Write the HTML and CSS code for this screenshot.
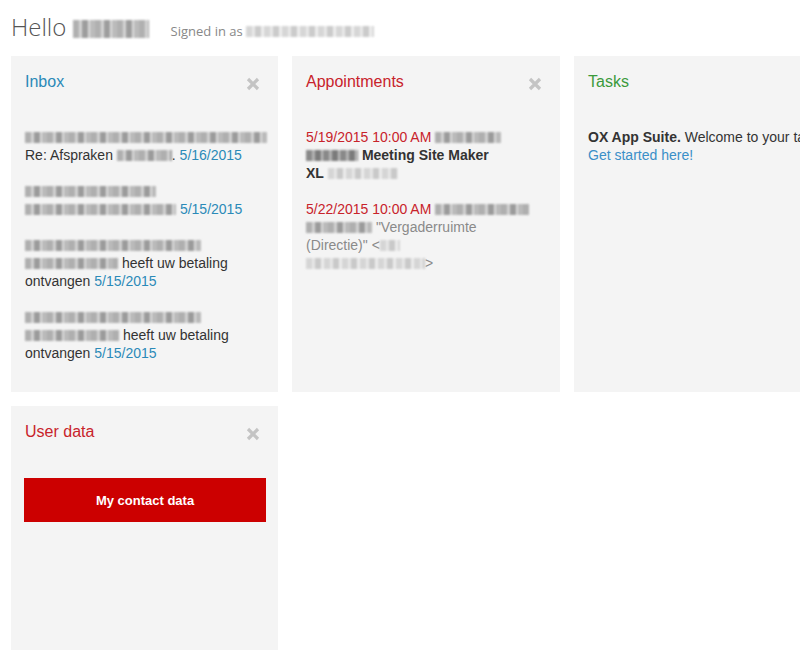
FILE: index.html
```html
<!DOCTYPE html>
<html>
<head>
<meta charset="utf-8">
<link rel="stylesheet" href="styles.css">
</head>
<body>
<header class="header">
  <h1 class="hello">Hello <span class="blur blur-name" style="width:76px"></span></h1>
  <span class="signed">Signed in as <span class="blur blur-light" style="width:128px"></span></span>
</header>
<main class="grid">
  <section class="card">
    <div class="card-head">
      <h2 class="title t-blue">Inbox</h2>
      <svg class="close" viewBox="0 0 14 14"><path d="M2 2L12 12M12 2L2 12"/></svg>
    </div>
    <div class="card-body">
      <p class="item"><span class="blur" style="width:242px"></span><br>Re: Afspraken <span class="blur" style="width:55px"></span>. <span class="date">5/16/2015</span></p>
      <p class="item"><span class="blur" style="width:131px"></span><br><span class="blur" style="width:151px"></span> <span class="date">5/15/2015</span></p>
      <p class="item"><span class="blur" style="width:176px"></span><br><span class="blur" style="width:93px"></span> heeft uw betaling ontvangen <span class="date">5/15/2015</span></p>
      <p class="item"><span class="blur" style="width:176px"></span><br><span class="blur" style="width:94px"></span> heeft uw betaling ontvangen <span class="date">5/15/2015</span></p>
    </div>
  </section>
  <section class="card">
    <div class="card-head">
      <h2 class="title t-red">Appointments</h2>
      <svg class="close" viewBox="0 0 14 14"><path d="M2 2L12 12M12 2L2 12"/></svg>
    </div>
    <div class="card-body">
      <p class="item"><span class="red">5/19/2015 10:00 AM</span> <span class="blur" style="width:66px"></span><br><b><span class="blur blur-dark" style="width:52px"></span> Meeting Site Maker<br>XL</b> <span class="blur blur-light" style="width:70px"></span></p>
      <p class="item"><span class="red">5/22/2015 10:00 AM</span> <span class="blur" style="width:94px"></span><br><span class="blur" style="width:66px"></span> <span class="grey">"Vergaderruimte<br>(Directie)" &lt;<span class="blur blur-light" style="width:20px"></span><br><span class="blur blur-light" style="width:119px"></span>&gt;</span></p>
    </div>
  </section>
  <section class="card">
    <div class="card-head">
      <h2 class="title t-green">Tasks</h2>
    </div>
    <div class="card-body">
      <p class="item nowrap"><b>OX App Suite.</b> Welcome to your tasks.<br><a class="link" href="#">Get started here!</a></p>
    </div>
  </section>
  <section class="card">
    <div class="card-head">
      <h2 class="title t-red">User data</h2>
      <svg class="close" viewBox="0 0 14 14"><path d="M2 2L12 12M12 2L2 12"/></svg>
    </div>
    <div class="card-body">
      <button class="btn">My contact data</button>
    </div>
  </section>
</main>
</body>
</html>
```

FILE: styles.css
```css
html, body {
  margin: 0;
  padding: 0;
  overflow: hidden;
  background: #fff;
}
body {
  width: 800px;
  height: 650px;
  font-family: "Liberation Sans", Arial, sans-serif;
  color: #333;
}
.header {
  display: flex;
  align-items: baseline;
  height: 56px;
  padding: 0 11px;
  box-sizing: border-box;
}
.hello {
  margin: 10px 0 0;
  font-family: "Open Sans", sans-serif;
  font-weight: 300;
  font-size: 24px;
  line-height: 34px;
  color: #555;
}
.signed {
  margin-left: 22px;
  font-family: "Open Sans", sans-serif;
  font-size: 13px;
  color: #888;
}
.grid {
  display: grid;
  grid-template-columns: 267px 268px 267px;
  grid-template-rows: 336px 260px;
  column-gap: 14px;
  row-gap: 14px;
  padding-left: 11px;
}
.card {
  background: #f4f4f4;
  padding: 16px 12px 16px 13px;
  box-sizing: border-box;
  overflow: hidden;
}
.card-head {
  display: flex;
  justify-content: space-between;
  align-items: center;
  height: 20px;
  padding-left: 1px;
}
.title {
  margin: 0;
  font-size: 16px;
  font-weight: normal;
  line-height: 20px;
}
.t-blue { color: #2b8ab8; }
.t-red { color: #c8232b; }
.t-green { color: #3b9a3b; }
.close {
  width: 14px;
  height: 14px;
  margin-right: 6px;
  margin-top: 4px;
}
.close path {
  stroke: #c4c4c4;
  stroke-width: 3.2;
  fill: none;
}
.card-body {
  margin-top: 36px;
  padding-left: 1px;
}
.item {
  margin: 0 0 18px;
  font-size: 14px;
  line-height: 18px;
}
.nowrap { white-space: nowrap; }
.date { color: #2b8ab8; }
.red { color: #c8232b; }
.grey { color: #8a8a8a; }
.link { color: #3a8fc8; text-decoration: none; }
.blur {
  display: inline-block;
  height: 11px;
  vertical-align: -1px;
  background: repeating-linear-gradient(90deg, #a3a3a3 0 6px, #cfcfcf 6px 9px, #8c8c8c 9px 15px, #dadada 15px 17px, #b0b0b0 17px 22px);
  filter: blur(1.2px);
  opacity: 0.85;
}
.blur-dark {
  background: repeating-linear-gradient(90deg, #777 0 6px, #aaa 6px 9px, #666 9px 15px, #bbb 15px 17px);
}
.blur-light {
  background: repeating-linear-gradient(90deg, #d0d0d0 0 6px, #e6e6e6 6px 9px, #c2c2c2 9px 15px, #ececec 15px 18px);
}
.blur-name {
  height: 18px;
  vertical-align: -2px;
}
.btn {
  display: block;
  width: calc(100% + 1px);
  margin-left: -1px;
  height: 44px;
  border: 0;
  background: #cc0000;
  color: #fff;
  font-family: "Liberation Sans", Arial, sans-serif;
  font-size: 13px;
  font-weight: bold;
}
```
